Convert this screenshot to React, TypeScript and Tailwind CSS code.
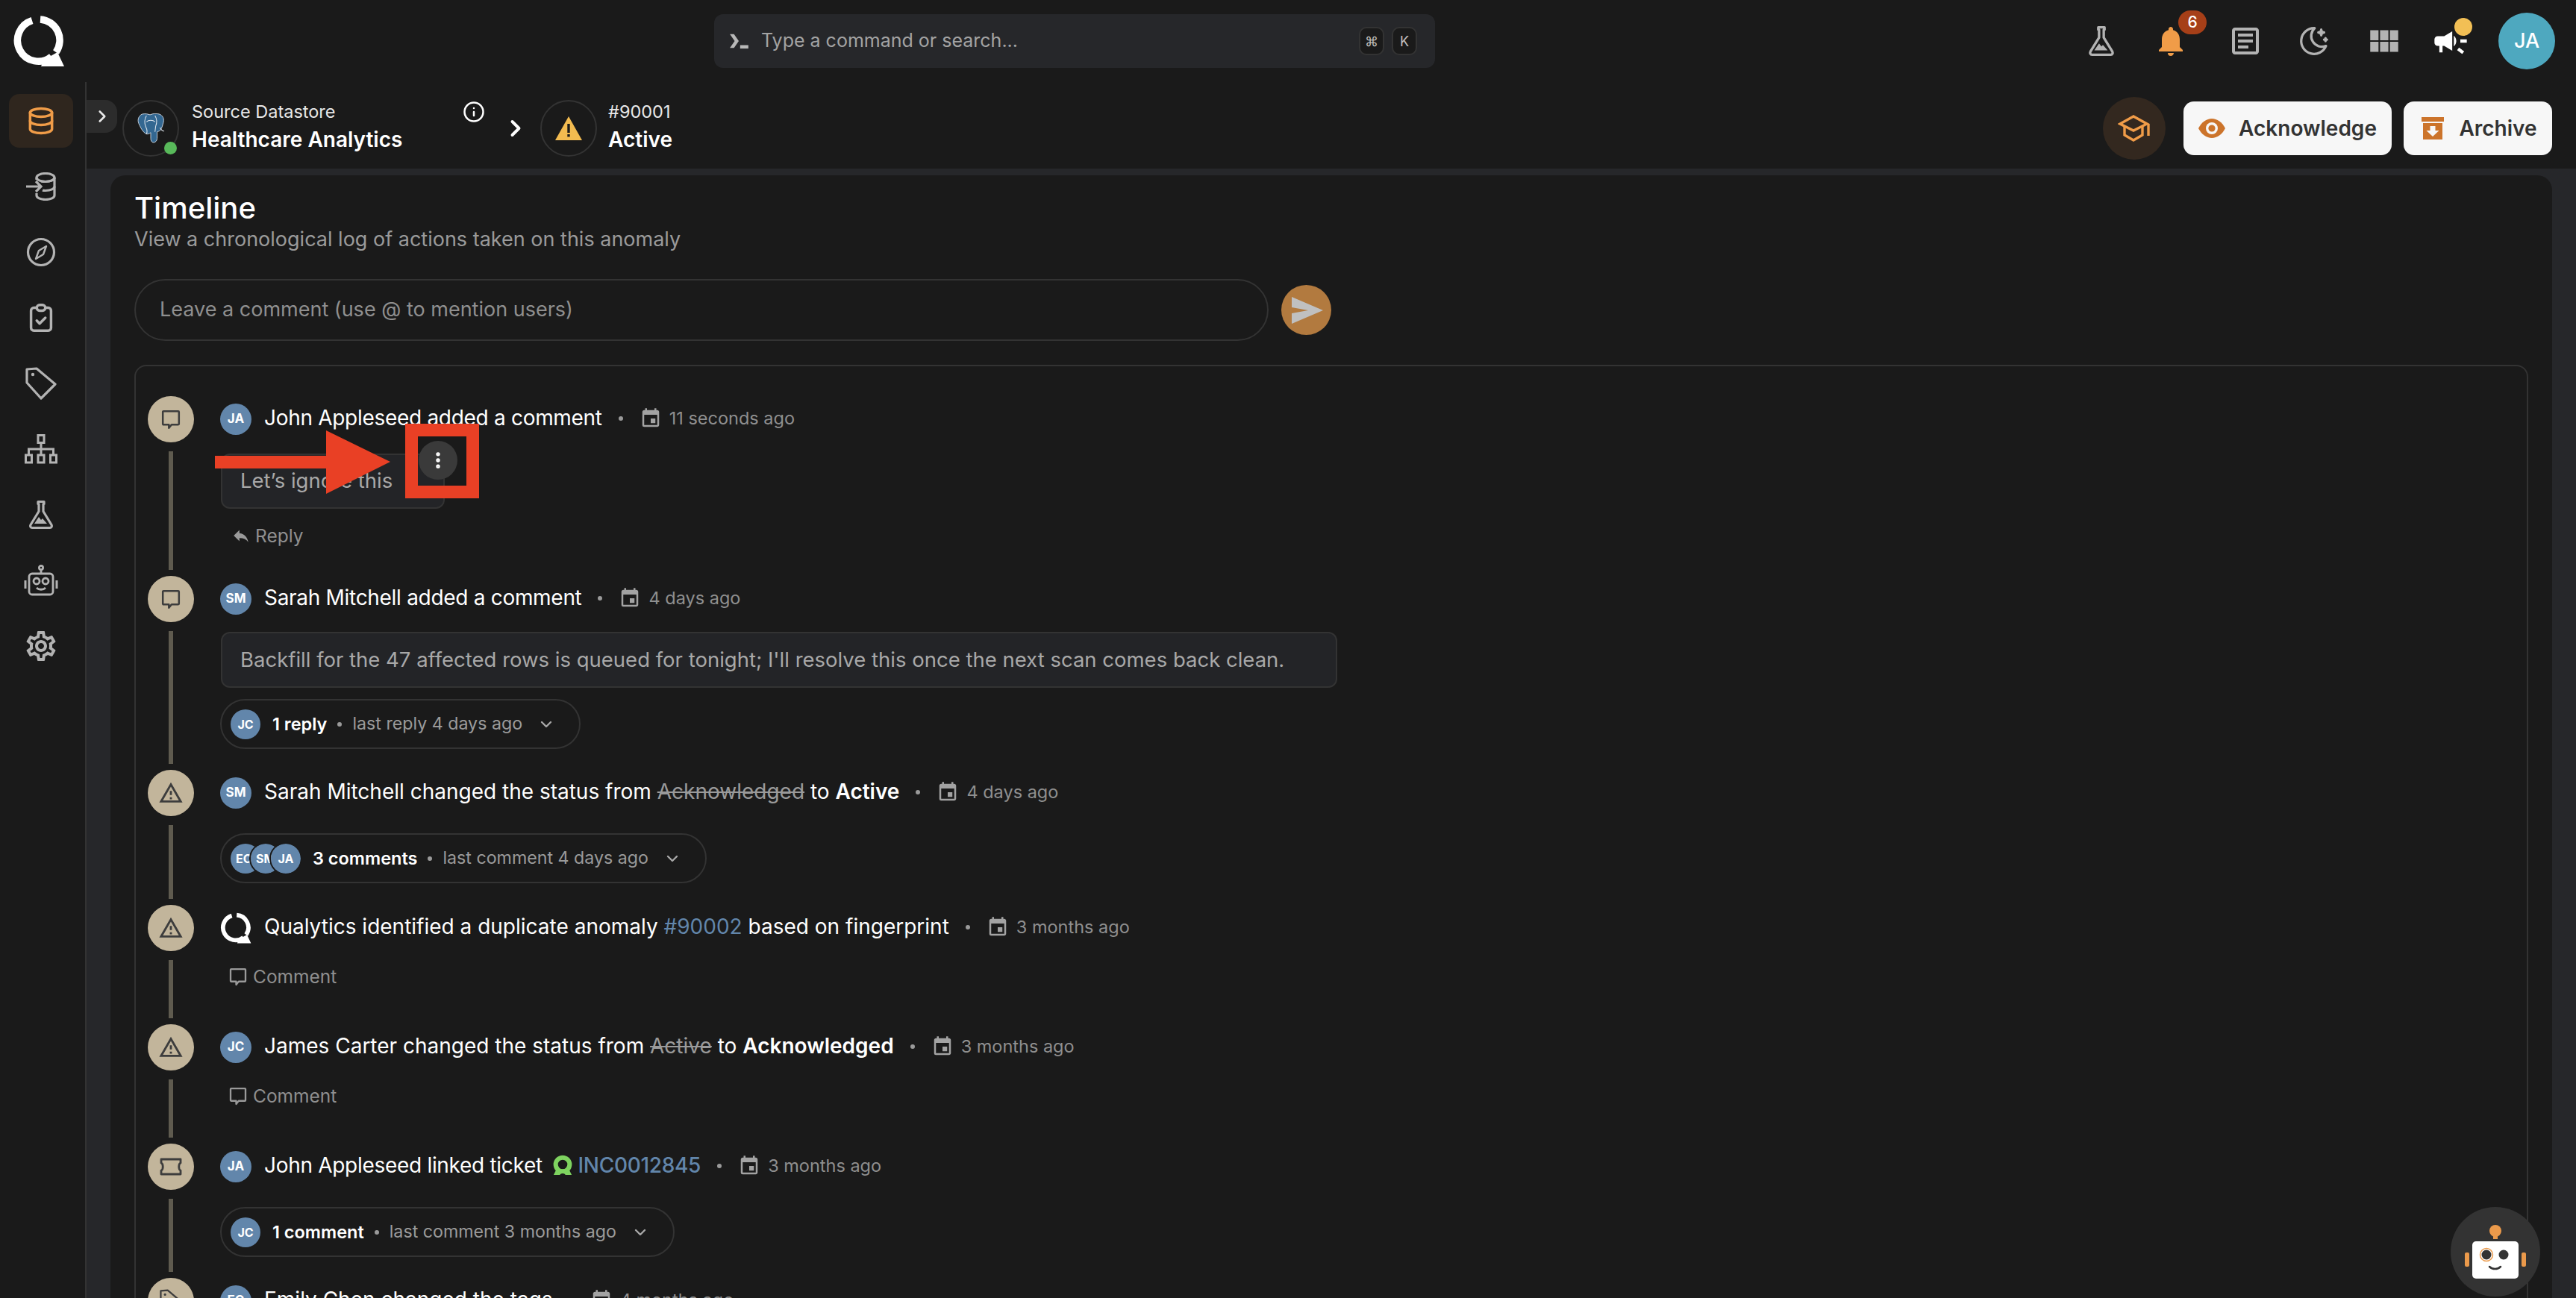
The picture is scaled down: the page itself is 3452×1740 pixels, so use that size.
// App.tsx
import type { ReactNode } from 'react'
import { ChevronDown, ChevronRight, EllipsisVertical, Info } from 'lucide-react'
import {
  MdCampaign,
  MdEvent,
  MdNotifications,
  MdOutlineArticle,
  MdOutlineReply,
  MdOutlineSettings,
  MdOutlineWarningAmber,
  MdViewModule,
} from 'react-icons/md'
import { TbClipboardCheck, TbDatabase, TbMoonStars } from 'react-icons/tb'

function QLogo({ className }: { className?: string }) {
  return (
    <svg viewBox="0 0 70 70" className={className} fill="none">
      <path d="M26 7.500 A28 28 0 1 0 52 56 M37 6 A28 28 0 0 1 58 50" stroke="#ffffff" strokeWidth="9.500" />
      <path d="M42 60 L60 50 L69 69 L38 69 Z" fill="#ffffff" />
    </svg>
  )
}

function TicketLogo({ className }: { className?: string }) {
  return (
    <svg viewBox="0 0 30 30" className={className} fill="none">
      <circle cx="15" cy="14" r="10" stroke="#7ed35f" strokeWidth="6.500" />
      <path d="M2 29l4-8h18l4 8z" fill="#7ed35f" />
      <path d="M11 29c1-3 7-3 8 0z" fill="#1a1a1a" />
    </svg>
  )
}

function FlaskIcon({ className }: { className?: string }) {
  return (
    <svg viewBox="0 0 36 40" className={className} fill="none" stroke="currentColor" strokeWidth="3.200">
      <path d="M14 2.500h8v3h-1v10l11 18c1 2 0 4-2 4H6c-2 0-3-2-2-4l11-18v-10h-1z" strokeLinejoin="round" />
      <path d="M9 32l6-9 3 4 2-2 6 7z" fill="currentColor" stroke="none" />
    </svg>
  )
}

function CompassIcon({ className }: { className?: string }) {
  return (
    <svg viewBox="0 0 40 40" className={className} fill="none" stroke="currentColor" strokeWidth="3.200">
      <circle cx="20" cy="20" r="17.500" />
      <path d="M27 12l-4 11-10 6 4-11z" strokeWidth="2.400" strokeLinejoin="round" />
    </svg>
  )
}

function DbImportIcon({ className }: { className?: string }) {
  return (
    <svg viewBox="0 0 40 38" className={className} fill="none" stroke="currentColor" strokeWidth="3.200">
      <ellipse cx="26" cy="7" rx="12" ry="5.500" />
      <path d="M14 7v3M38 7v24c0 3-5 5.500-12 5.500S14 34 14 31v-3" />
      <path d="M38 19c0 3-5 5.500-12 5.500-2 0-3 0-4-.5M20 12c2 .5 4 .5 6 .5 7 0 12-2.500 12-5.500" />
      <path d="M0 19h19M13 12l7 7-7 7" />
    </svg>
  )
}

function TagOutlineIcon({ className }: { className?: string }) {
  return (
    <svg viewBox="0 0 42 44" className={className} fill="none" stroke="currentColor" strokeWidth="3.200">
      <path d="M2 3l13-1 25 21-19 19L2 21z" strokeLinejoin="round" />
      <circle cx="10" cy="10" r="2.200" fill="currentColor" stroke="none" />
    </svg>
  )
}

function SitemapIcon({ className }: { className?: string }) {
  return (
    <svg viewBox="0 0 44 40" className={className} fill="none" stroke="currentColor" strokeWidth="3">
      <rect x="18" y="1.500" width="8" height="10" />
      <rect x="1.500" y="28" width="8" height="10" />
      <rect x="18" y="28" width="8" height="10" />
      <rect x="34.500" y="28" width="8" height="10" />
      <path d="M22 12v16M5.500 28v-8h33v8" />
    </svg>
  )
}

function RobotIcon({ className }: { className?: string }) {
  return (
    <svg viewBox="0 0 46 42" className={className} fill="none" stroke="currentColor" strokeWidth="2.800">
      <circle cx="23" cy="4" r="2.600" />
      <path d="M23 7v5" />
      <rect x="7" y="12" width="32" height="28" rx="4" />
      <circle cx="17" cy="22" r="4" />
      <circle cx="29" cy="22" r="4" />
      <path d="M17 31c3 3 9 3 12 0" />
      <path d="M2 21v11M44 21v11" strokeWidth="3" />
    </svg>
  )
}

function BubbleIcon({ className }: { className?: string }) {
  return (
    <svg viewBox="0 0 28 30" className={className} fill="none" stroke="currentColor" strokeWidth="2.800">
      <path d="M3 2.500h22a1 1 0 0 1 1 1v18a1 1 0 0 1-1 1H15l-4 5v-5H3a1 1 0 0 1-1-1v-18a1 1 0 0 1 1-1z" strokeLinejoin="round" />
    </svg>
  )
}

function TicketIcon({ className }: { className?: string }) {
  return (
    <svg viewBox="0 0 30 24" className={className} fill="none" stroke="currentColor" strokeWidth="2.800">
      <path d="M2 2h26v5c-3 1-3 9 0 10v5H2v-5c3-1 3-9 0-10z" strokeLinejoin="round" />
    </svg>
  )
}

function PostgresIcon({ className }: { className?: string }) {
  return (
    <svg viewBox="0 0 40 42" className={className}>
      <path
        d="M8 1c5-1 8 0 11 1 4-2 9-2 13-1 5 2 7 6 6 11-1 4-2 8-4 11-1 2-3 2-5 3v9c0 3-2 6-5 6s-4-3-4-6v-8c-2 2-6 3-8 1-5-4-7-10-9-14C1 9 3 3 8 1z"
        fill="#336791"
        stroke="#cdd7e2"
        strokeWidth="1"
      />
      <path d="M14 3c-3 5-3 11-1 16 2 4 2 8 1 10M26 3c3 5 3 10 1 15l-1 8M14 12c3-3 9-3 12 0M33 20c2 4 5 5 6 5" fill="none" stroke="#dfe6ee" strokeWidth="1.100" />
    </svg>
  )
}

function GradIcon({ className }: { className?: string }) {
  return (
    <svg viewBox="0 0 44 36" className={className} fill="none" stroke="currentColor" strokeWidth="3.400">
      <path d="M21 2L3 12l18 9 18-9z" />
      <path d="M9 15v12l12 7 12-7V15" />
      <path d="M41 12v16" />
    </svg>
  )
}

function EyeIcon({ className }: { className?: string }) {
  return (
    <svg viewBox="0 0 36 26" className={className}>
      <path d="M0 13C4 5 11 0 18 0s14 5 18 13c-4 8-11 13-18 13S4 21 0 13z" fill="#cc742b" />
      <circle cx="18" cy="13" r="8" fill="#f7f7f7" />
      <circle cx="18" cy="13" r="4.600" fill="#cc742b" />
    </svg>
  )
}

function ArchiveIcon({ className }: { className?: string }) {
  return (
    <svg viewBox="0 0 30 30" className={className}>
      <rect x="0" y="0" width="30" height="6" fill="#cc742b" />
      <rect x="2" y="8" width="26" height="22" fill="#cc742b" />
      <path d="M11.500 12h7v6h5l-8.500 8-8.500-8h5z" fill="#f7f7f7" />
    </svg>
  )
}

function Avatar({ text }: { text: string }) {
  return (
    <div className="flex h-[42px] w-[42px] shrink-0 items-center justify-center rounded-full bg-[#6286ab] text-[17px] font-bold text-white">
      {text}
    </div>
  )
}

function TimeStamp({ children }: { children: string }) {
  return (
    <>
      <span className="mx-[22px] h-[6px] w-[6px] shrink-0 -translate-y-[1px] rounded-full bg-[#9a9a9a]" />
      <MdEvent className="mr-[10px] h-[30px] w-[30px] shrink-0 -translate-y-[1px] text-[#a3a3a3]" />
      <span className="-translate-y-[1px] text-[23.5px] text-[#8f8f8f]">{children}</span>
    </>
  )
}

function Head({
  avatar,
  time,
  tight,
  children,
}: {
  avatar: ReactNode
  time: string
  tight?: boolean
  children: ReactNode
}) {
  return (
    <div className="flex h-[62px] items-center whitespace-pre">
      {avatar}
      <div className={`ml-[17px] -translate-y-[2px] text-[28px] leading-none text-white ${tight ? 'tracking-[-0.3px]' : ''}`}>
        {children}
      </div>
      <TimeStamp>{time}</TimeStamp>
    </div>
  )
}

function Pill({
  avatars,
  label,
  meta,
  marginTop,
}: {
  avatars: string[]
  label: string
  meta: string
  marginTop: string
}) {
  return (
    <div className={`flex h-[67px] w-fit items-center rounded-full border-2 border-[#333333] pl-[12px] pr-[32px] ${marginTop}`}>
      <div className="flex">
        {avatars.map((a, i) => (
          <div
            key={a}
            className={`flex h-[40px] w-[40px] items-center overflow-hidden rounded-full bg-[#6286ab] text-[16px] font-bold text-white ${
              i === avatars.length - 1 ? 'justify-center' : 'justify-start pl-[7px]'
            } ${i > 0 ? '-ml-[13px] outline-2 outline-[#1a1a1a]' : ''}`}
          >
            {a}
          </div>
        ))}
      </div>
      <span className="ml-[16px] text-[23.5px] font-semibold text-white">{label}</span>
      <span className="mx-[14px] h-[6px] w-[6px] rounded-full bg-[#9a9a9a]" />
      <span className="text-[23.2px] text-[#9a9a9a]">{meta}</span>
      <ChevronDown className="ml-[20px] h-[24px] w-[24px] text-[#a8a8a8]" strokeWidth={2.4} />
    </div>
  )
}

function CommentLink() {
  return (
    <div className="ml-[12px] mt-[20px] flex h-[28px] items-center gap-[8px] text-[24.5px] text-[#8f8f8f]">
      <BubbleIcon className="h-[25px] w-[24px] text-[#9a9a9a]" />
      Comment
    </div>
  )
}

function TimelineItem({
  icon,
  height,
  children,
}: {
  icon: ReactNode
  height: string
  children: ReactNode
}) {
  return (
    <div className={`flex shrink-0 ${height}`}>
      <div className="flex w-[62px] shrink-0 flex-col items-center">
        <div className="flex h-[62px] w-[62px] shrink-0 items-center justify-center rounded-full bg-[#c2b59b] text-[#3d3d3d]">
          {icon}
        </div>
        <div className="mb-[8px] mt-[12px] w-[6px] flex-1 bg-[#5f5b4f]" />
      </div>
      <div className="ml-[35px] min-w-0 flex-1">{children}</div>
    </div>
  )
}

const warn = <MdOutlineWarningAmber className="h-[34px] w-[34px]" />
const bubble = <BubbleIcon className="h-[27px] w-[26px]" />

const navIcons = [
  <DbImportIcon key="a" className="h-[38px] w-[40px]" />,
  <CompassIcon key="b" className="h-[40px] w-[40px]" />,
  <TbClipboardCheck key="c" className="h-[46px] w-[46px]" strokeWidth={1.8} />,
  <TagOutlineIcon key="d" className="h-[44px] w-[42px]" />,
  <SitemapIcon key="e" className="h-[40px] w-[44px]" />,
  <FlaskIcon key="f" className="h-[40px] w-[36px]" />,
  <RobotIcon key="g" className="h-[42px] w-[46px]" />,
  <MdOutlineSettings key="h" className="h-[48px] w-[48px]" />,
]

export default function App() {
  return (
    <div className="relative flex h-[1740px] w-[3452px] flex-col overflow-hidden bg-[#1a1a1a] font-['Inter',sans-serif] text-white">
      {/* top bar */}
      <header className="flex h-[110px] shrink-0 items-center">
        <div className="w-[957px] pl-[17px]">
          <QLogo className="h-[70px] w-[70px]" />
        </div>
        <div className="flex h-[72px] w-[966px] items-center rounded-[12px] bg-[#26272a] pl-[18px] pr-[24px]">
          <svg viewBox="0 0 30 24" className="h-[22px] w-[30px] text-[#b8b8b8]">
            <path d="M2 2h6l7 10-7 10H2l7-10z" fill="currentColor" />
            <rect x="17" y="18" width="12" height="5" fill="currentColor" />
          </svg>
          <span className="ml-[15px] flex-1 text-[25px] text-[#a3a3a3]">Type a command or search...</span>
          <kbd className="flex h-[38px] w-[34px] items-center justify-center rounded-[10px] border-2 border-[#333333] bg-[#1a1a1a] font-['Inter',sans-serif] text-[18px] text-[#c0c0c0]">⌘</kbd>
          <kbd className="ml-[10px] flex h-[38px] w-[34px] items-center justify-center rounded-[10px] border-2 border-[#333333] bg-[#1a1a1a] font-['Inter',sans-serif] text-[18px] text-[#c0c0c0]">K</kbd>
        </div>
        <div className="flex flex-1 items-center justify-end pr-[28px]">
          <FlaskIcon className="mr-[50px] h-[42px] w-[38px] text-[#b3b3b3]" />
          <div className="relative mr-[52px]">
            <MdNotifications className="h-[48px] w-[48px] text-[#f09c48]" />
            <span className="absolute -right-[24px] -top-[17px] flex h-[32px] w-[38px] items-center justify-center rounded-full bg-[#a63f18] text-[21px] font-medium text-white">6</span>
          </div>
          <MdOutlineArticle className="mr-[45px] h-[48px] w-[48px] text-[#b3b3b3]" />
          <TbMoonStars className="mr-[46px] h-[46px] w-[46px] text-[#b3b3b3]" strokeWidth={1.7} />
          <MdViewModule className="mr-[38px] h-[50px] w-[50px] text-[#b3b3b3]" />
          <div className="relative mr-[38px]">
            <MdCampaign className="h-[52px] w-[52px] text-white" />
            <span className="absolute -right-[3px] -top-[5px] h-[24px] w-[24px] rounded-full bg-[#f2bf55]" />
          </div>
          <div className="flex h-[76px] w-[76px] items-center justify-center rounded-full bg-[#4ea8bf] text-[27px] font-medium text-white">JA</div>
        </div>
      </header>

      <div className="flex min-h-0 flex-1">
        {/* left nav */}
        <nav className="flex w-[116px] shrink-0 flex-col items-center border-r-2 border-[#333333] pt-[16px] text-[#b3b3b3]">
          <div className="flex h-[72px] w-[86px] -translate-x-[2px] items-center justify-center rounded-[14px] bg-[#2f261e]">
            <TbDatabase className="h-[44px] w-[44px] text-[#f09c48]" strokeWidth={1.9} />
          </div>
          <div className="mt-[8px] flex flex-col items-center">
            {navIcons.map((icon) => (
              <div key={icon.key} className="flex h-[88px] -translate-x-[2px] items-center justify-center">
                {icon}
              </div>
            ))}
          </div>
        </nav>

        <main className="flex min-w-0 flex-1 flex-col">
          {/* breadcrumb bar */}
          <div className="flex h-[116px] shrink-0 items-center pr-[32px] pt-[8px]">
            <div className="flex h-[44px] w-[41px] -translate-y-[16px] items-center justify-center rounded-r-[16px] bg-[#2c2c2c]">
              <ChevronRight className="h-[26px] w-[26px] text-[#e8e8e8]" strokeWidth={2.4} />
            </div>
            <div className="relative ml-[7px] flex h-[76px] w-[76px] items-center justify-center rounded-full border-2 border-[#333333]">
              <PostgresIcon className="h-[40px] w-[38px]" />
              <span className="absolute bottom-[1px] right-[1px] h-[17px] w-[17px] rounded-full bg-[#58b95a]" />
            </div>
            <div className="ml-[17px] w-[369px] -translate-y-[3px]">
              <div className="flex items-center justify-between">
                <span className="text-[23.5px] leading-[30px] text-[#e8e8e8]">Source Datastore</span>
                <Info className="h-[30px] w-[30px] translate-x-[24px] text-white" strokeWidth={2} />
              </div>
              <div className="mt-[5px] text-[28px] font-semibold leading-[34px] text-white">Healthcare Analytics</div>
            </div>
            <ChevronRight className="ml-[47px] h-[36px] w-[36px] text-white" strokeWidth={2.6} />
            <div className="ml-[15px] flex h-[76px] w-[76px] items-center justify-center rounded-full border-2 border-[#333333]">
              <svg viewBox="0 0 36 32" className="h-[32px] w-[36px]">
                <path d="M18 0l18 32H0z" fill="#f2bb50" />
                <rect x="16.300" y="10" width="3.400" height="12" fill="#1a1a1a" />
                <rect x="16.300" y="24" width="3.400" height="3.400" fill="#1a1a1a" />
              </svg>
            </div>
            <div className="ml-[15px] -translate-y-[3px]">
              <div className="text-[23.5px] leading-[30px] text-[#e8e8e8]">#90001</div>
              <div className="mt-[5px] text-[28px] font-semibold leading-[34px] text-white">Active</div>
            </div>
            <div className="ml-auto flex items-center">
              <div className="flex h-[84px] w-[84px] items-center justify-center rounded-full bg-[#33281f]">
                <GradIcon className="h-[36px] w-[44px] text-[#f09c48]" />
              </div>
              <button className="ml-[24px] flex h-[72px] w-[279px] items-center justify-center gap-[18px] rounded-[14px] bg-[#f7f7f7] text-[28px] font-semibold text-[#333333]">
                <EyeIcon className="h-[26px] w-[36px]" />
                Acknowledge
              </button>
              <button className="ml-[16px] flex h-[72px] w-[199px] items-center justify-center gap-[20px] rounded-[14px] bg-[#f7f7f7] pl-[4px] text-[28px] font-semibold text-[#333333]">
                <ArchiveIcon className="h-[30px] w-[30px]" />
                Archive
              </button>
            </div>
          </div>

          {/* content */}
          <div className="min-h-0 flex-1 bg-[#26272a] pl-[32px] pr-[32px] pt-[9px]">
            <section className="h-[1600px] rounded-t-[20px] bg-[#1a1a1a] px-[32px] pt-[22px]">
              <h1 className="text-[40px] font-medium leading-[44px] text-white">Timeline</h1>
              <p className="text-[27px] leading-[40px] text-[#9a9a9a]">View a chronological log of actions taken on this anomaly</p>

              <div className="mt-[33px] flex items-center">
                <div className="flex h-[83px] w-[1520px] items-center rounded-full border-2 border-[#333333] pl-[32px] text-[27px] text-[#8f8f8f]">
                  Leave a comment (use @ to mention users)
                </div>
                <div className="ml-[17px] flex h-[67px] w-[67px] items-center justify-center rounded-full bg-[#b27a3f]">
                  <svg viewBox="0 0 42 36" className="ml-[2px] h-[36px] w-[42px]">
                    <path d="M0 0l42 18L0 36V22l22-4L0 14z" fill="#c0c0c0" />
                  </svg>
                </div>
              </div>

              <div className="mt-[32px] h-[1400px] rounded-t-[16px] border-2 border-b-0 border-[#333333] pl-[16px] pt-[40px]">
                <TimelineItem icon={bubble} height="h-[241px]">
                  <Head avatar={<Avatar text="JA" />} time="11 seconds ago" tight>John Appleseed added a comment</Head>
                  <div className="relative ml-px mt-[15px] flex h-[74px] w-[300px] items-center rounded-[12px] border-2 border-[#333333] bg-[#232427] pl-[24px] text-[27.5px] text-[#a8a8a8]">
                    Let’s ignore this
                    <div className="absolute -top-[19px] left-[263px] flex h-[52px] w-[52px] items-center justify-center rounded-full bg-[#3a3a3a]">
                      <EllipsisVertical className="h-[28px] w-[28px] text-white" strokeWidth={2.6} />
                    </div>
                  </div>
                  <div className="ml-[15px] mt-[21px] flex h-[30px] items-center gap-[6px] text-[24.5px] text-[#8f8f8f]">
                    <MdOutlineReply className="h-[26px] w-[26px] text-[#9a9a9a]" />
                    Reply
                  </div>
                </TimelineItem>

                <TimelineItem icon={bubble} height="h-[260px]">
                  <Head avatar={<Avatar text="SM" />} time="4 days ago" tight>Sarah Mitchell added a comment</Head>
                  <div className="ml-px mt-[13px] flex h-[75px] w-[1496px] items-center rounded-[12px] border-2 border-[#333333] bg-[#232427] pl-[24px] text-[27.5px] text-[#a8a8a8]">
                    Backfill for the 47 affected rows is queued for tonight; I'll resolve this once the next scan comes back clean.
                  </div>
                  <Pill avatars={['JC']} label="1 reply" meta="last reply 4 days ago" marginTop="mt-[15px]" />
                </TimelineItem>

                <TimelineItem icon={warn} height="h-[181px]">
                  <Head avatar={<Avatar text="SM" />} time="4 days ago">
                    Sarah Mitchell changed the status from <span className="text-[#9a9a9a] line-through">Acknowledged</span> to <span className="font-semibold">Active</span>
                  </Head>
                  <Pill avatars={['EC', 'SM', 'JA']} label="3 comments" meta="last comment 4 days ago" marginTop="mt-[23px]" />
                </TimelineItem>

                <TimelineItem icon={warn} height="h-[160px]">
                  <Head avatar={<QLogo className="h-[42px] w-[42px] shrink-0" />} time="3 months ago">
                    Qualytics identified a duplicate anomaly <span className="text-[#6286ab]">#90002</span> based on fingerprint
                  </Head>
                  <CommentLink />
                </TimelineItem>

                <TimelineItem icon={warn} height="h-[160px]">
                  <Head avatar={<Avatar text="JC" />} time="3 months ago">
                    James Carter changed the status from <span className="text-[#9a9a9a] line-through">Active</span> to <span className="font-semibold">Acknowledged</span>
                  </Head>
                  <CommentLink />
                </TimelineItem>

                <TimelineItem icon={<TicketIcon className="h-[24px] w-[30px]" />} height="h-[180px]">
                  <Head avatar={<Avatar text="JA" />} time="3 months ago" tight>
                    <span className="inline-flex items-center">
                      John Appleseed linked ticket <TicketLogo className="mx-[6px] h-[28px] w-[28px]" />
                      <span className="font-medium text-[#6286ab]">INC0012845</span>
                    </span>
                  </Head>
                  <Pill avatars={['JC']} label="1 comment" meta="last comment 3 months ago" marginTop="mt-[23px]" />
                </TimelineItem>

                <TimelineItem icon={<TagOutlineIcon className="h-[32px] w-[30px]" />} height="h-[180px]">
                  <Head avatar={<Avatar text="EC" />} time="4 months ago">Emily Chen changed the tags</Head>
                </TimelineItem>
              </div>
            </section>
          </div>
        </main>
      </div>

      {/* assistant bubble */}
      <div className="absolute bottom-[2px] right-[48px] flex h-[120px] w-[120px] items-center justify-center rounded-full bg-[#333333]">
        <svg viewBox="0 0 82 72" className="h-[72px] w-[82px]">
          <circle cx="41" cy="8" r="8" fill="#eb9a4b" />
          <rect x="38" y="13" width="6" height="6" fill="#eb9a4b" />
          <rect x="10" y="22" width="62" height="50" rx="5" fill="#ffffff" />
          <rect x="0" y="37" width="6" height="19" rx="2" fill="#eb9a4b" />
          <rect x="76" y="37" width="6" height="19" rx="2" fill="#eb9a4b" />
          <circle cx="29" cy="40" r="8.500" fill="none" stroke="#eb9a4b" strokeWidth="1.500" />
          <circle cx="29" cy="40" r="6.500" fill="#333333" />
          <circle cx="52" cy="40" r="6.500" fill="#333333" />
          <path d="M33 56c4 4 11 4 15 0" fill="none" stroke="#333333" strokeWidth="2.500" strokeLinecap="round" />
        </svg>
      </div>

      {/* red annotation, drawn over the screenshot */}
      <svg viewBox="0 0 235 85" className="pointer-events-none absolute left-[288px] top-[577px] h-[85px] w-[235px]">
        <path d="M0 34h149V0l86 42-86 43V51H0z" fill="#e94025" />
      </svg>
      <div className="pointer-events-none absolute left-[543px] top-[568px] h-[100px] w-[99px] border-[17px] border-[#e94025]" />
    </div>
  )
}
